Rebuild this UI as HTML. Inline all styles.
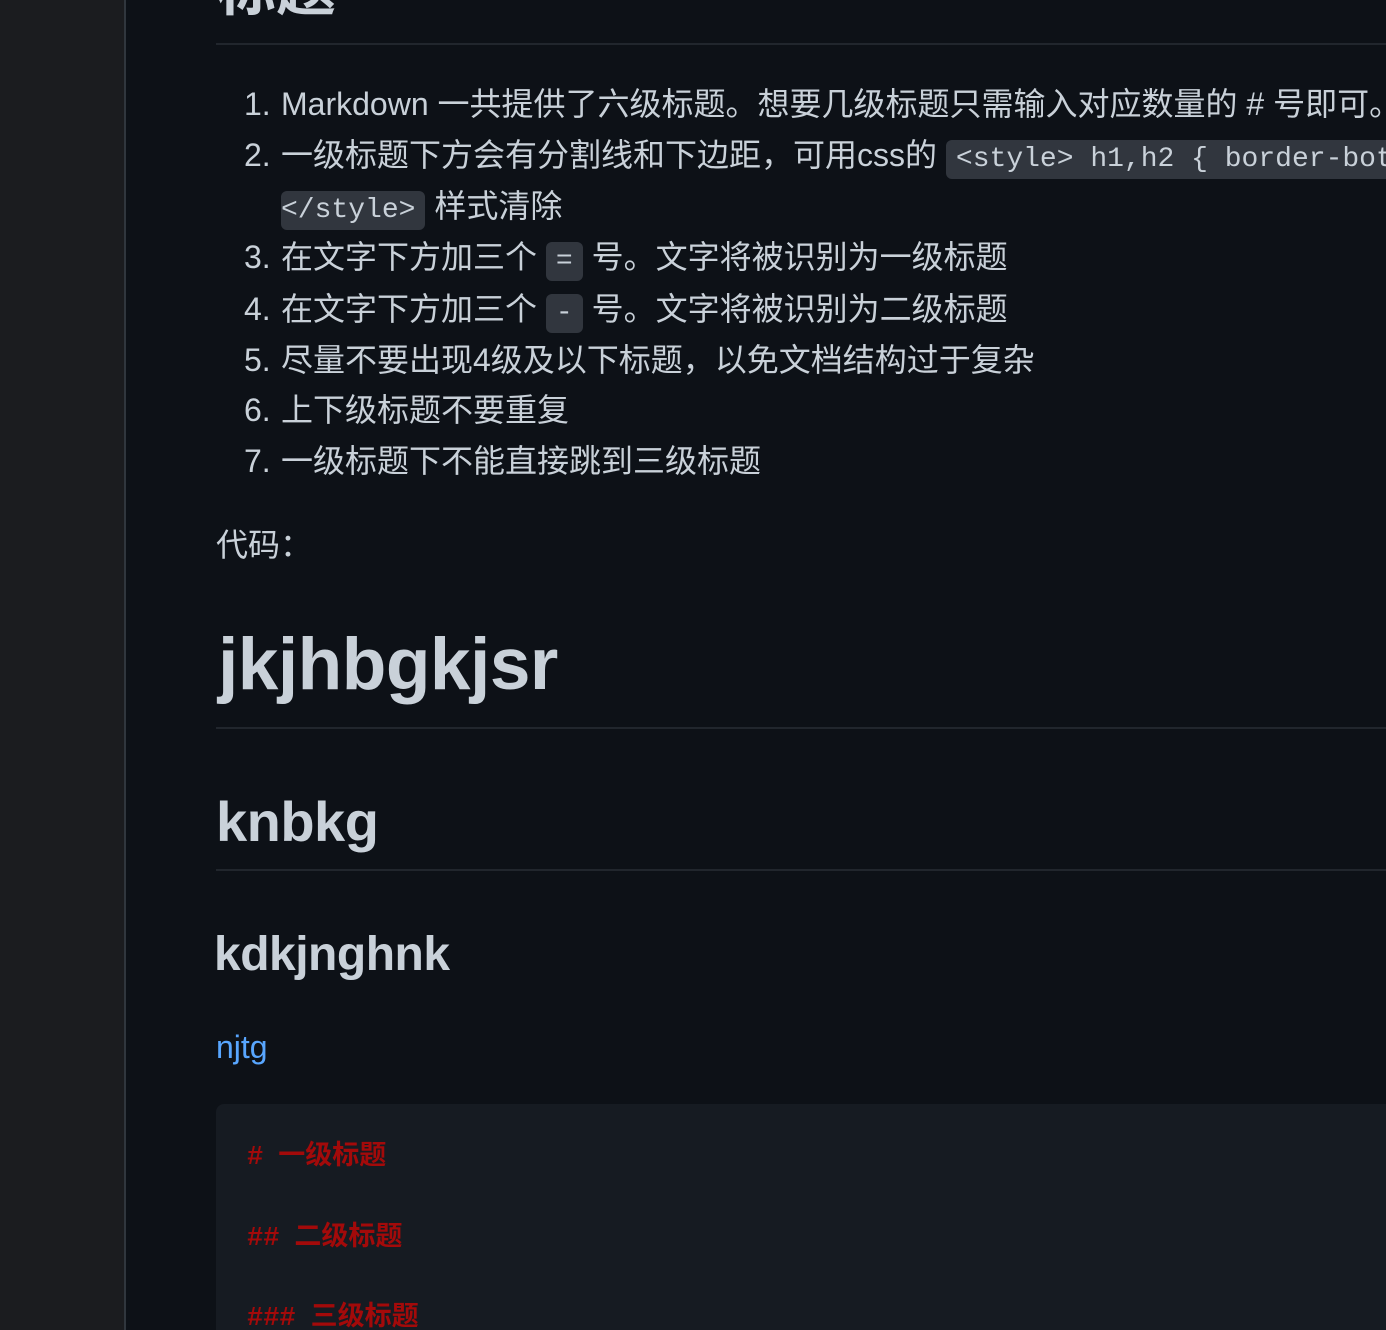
<!DOCTYPE html>
<html><head><meta charset="utf-8"><style>
html,body{margin:0;padding:0;overflow:hidden}
body{width:1386px;height:1330px;overflow:hidden;background:#0d1117;position:relative;font-family:"Liberation Sans","Noto Sans CJK SC",sans-serif;color:#c9d1d9}
.side{position:absolute;left:0;top:0;width:124px;height:1330px;background:#1b1c1f;border-right:2px solid #30363d}
.a{position:absolute;white-space:nowrap}
.wrap{position:absolute;left:0;top:0;width:1386px;height:1330px;overflow:hidden}
.li{font-size:32px;line-height:50px;height:50px}
.li .n{position:absolute;left:-37px}
code{font-family:"Liberation Mono",monospace;font-size:28px;background:#31363e;border-radius:6px;padding:4px 10px}
.rule{position:absolute;left:216px;right:0;height:2px;background:#21262d}
.red{font-size:27px;font-weight:bold;color:#a30a0a;line-height:40px}
.red b{font-family:"Liberation Mono",monospace}
</style></head><body><div class="wrap">
<div class="side"></div>
<div class="a" style="left:216px;top:-40px;font-size:60px;font-weight:bold;line-height:60px">标题</div>
<div class="rule" style="top:43px"></div>
<div class="a li" style="left:281px;top:79px"><span class="n">1.</span>Markdown 一共提供了六级标题。想要几级标题只需输入对应数量的 # 号即可。</div>
<div class="a li" style="left:281px;top:130px"><span class="n">2.</span>一级标题下方会有分割线和下边距，可用css的 <code>&lt;style&gt; h1,h2 { border-bottom: none }</code></div>
<div class="a li" style="left:281px;top:181px"><code style="padding-left:0">&lt;/style&gt;</code> 样式清除</div>
<div class="a li" style="left:281px;top:232px"><span class="n">3.</span>在文字下方加三个 <code>=</code> 号。文字将被识别为一级标题</div>
<div class="a li" style="left:281px;top:284px"><span class="n">4.</span>在文字下方加三个 <code>-</code> 号。文字将被识别为二级标题</div>
<div class="a li" style="left:281px;top:335px"><span class="n">5.</span>尽量不要出现4级及以下标题，以免文档结构过于复杂</div>
<div class="a li" style="left:281px;top:385px"><span class="n">6.</span>上下级标题不要重复</div>
<div class="a li" style="left:281px;top:436px"><span class="n">7.</span>一级标题下不能直接跳到三级标题</div>
<div class="a li" style="left:216px;top:520px">代码：</div>
<div class="a" style="left:218px;top:625px;font-size:73px;font-weight:bold;line-height:80px;letter-spacing:-0.5px">jkjhbgkjsr</div>
<div class="rule" style="top:727px"></div>
<div class="a" style="left:216px;top:792px;font-size:56px;font-weight:bold;line-height:60px;letter-spacing:-0.5px">knbkg</div>
<div class="rule" style="top:869px"></div>
<div class="a" style="left:214px;top:930px;font-size:48px;font-weight:bold;line-height:50px;letter-spacing:-0.5px">kdkjnghnk</div>
<div class="a" style="left:216px;top:1027px;font-size:32px;line-height:40px;color:#58a6ff">njtg</div>
<div class="a" style="left:216px;top:1104px;width:1170px;height:226px;background:#161b22;border-top-left-radius:8px"></div>
<div class="a red" style="left:247px;top:1135px"><b>#</b>&nbsp; 一级标题</div>
<div class="a red" style="left:247px;top:1216px"><b>##</b>&nbsp; 二级标题</div>
<div class="a red" style="left:247px;top:1296px"><b>###</b>&nbsp; 三级标题</div>
</div></body></html>
